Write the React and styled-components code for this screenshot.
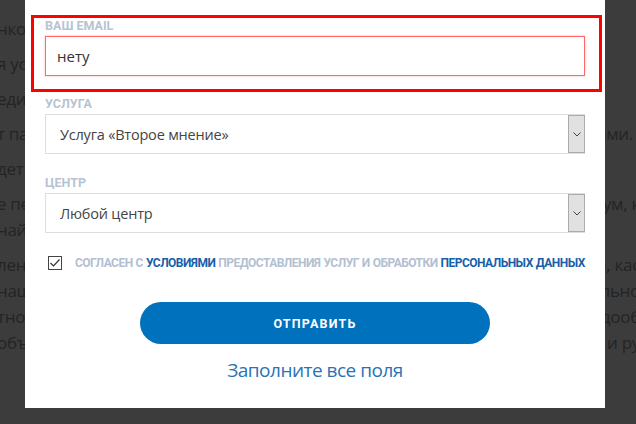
import React from 'react';
import styled, { createGlobalStyle } from 'styled-components';

const GlobalStyle = createGlobalStyle`
  html, body {
    margin: 0;
    padding: 0;
    overflow: hidden;
  }
  body {
    background: #3c3c3c;
    font-family: "Open Sans", "Noto Sans", sans-serif;
  }
`;

const Page = styled.div`
  position: relative;
  width: 636px;
  height: 424px;
  overflow: hidden;
  background: #3c3c3c;
`;

// the page behind the dimmed overlay
const Article = styled.div`
  margin: -19px 0 0 -3px;
  width: 643px;
  color: #242424;
  font-size: 17px;
  letter-spacing: -0.3px;
`;

const Para = styled.div`
  margin-bottom: 9px;
`;

const Line = styled.div`
  display: flex;
  justify-content: space-between;
  height: 26px;
  line-height: 26px;
  white-space: nowrap;
  padding-right: ${props => props.tail || 0}px;
`;

const Modal = styled.div`
  position: absolute;
  left: 25px;
  top: -20px;
  width: 580px;
  box-sizing: border-box;
  padding: 35px 20px 26px;
  background: #fff;
`;

const Highlight = styled.div`
  margin: 0 -17px 0 -14px;
  padding: 0 14px 13px 11px;
  border: 3px solid #ff0000;
`;

const Group = styled.div`
  margin-top: ${props => props.gap || 21}px;
`;

const Label = styled.div`
  font-family: "Roboto", "Open Sans", sans-serif;
  font-weight: 700;
  font-size: 12.5px;
  line-height: 15px;
  color: #b7c3d3;
  text-transform: uppercase;
  margin-bottom: 3px;
`;

const Input = styled.div`
  box-sizing: border-box;
  height: 40px;
  display: flex;
  align-items: center;
  padding: 0 11px;
  border: 1px solid #ff6b6b;
  box-shadow: 0 0 2px rgba(255, 80, 80, 0.45);
  font-size: 15px;
  color: #333;
`;

const Select = styled.div`
  box-sizing: border-box;
  height: 40px;
  display: flex;
  border: 1px solid #dedede;
  font-size: 14.5px;
  letter-spacing: -0.2px;
  color: #444;
`;

const SelectValue = styled.div`
  flex: 1;
  display: flex;
  align-items: center;
  padding-left: 14px;
`;

const Arrow = styled.div`
  width: 15px;
  margin-right: -1px;
  display: flex;
  align-items: center;
  justify-content: center;
  background: #e1e1e1;
  border: 1px solid #ababab;
`;

const Agree = styled.div`
  margin-top: 22px;
  display: flex;
  align-items: center;
  gap: 13px;
  padding-left: 3px;
  line-height: 16px;

  svg {
    flex-shrink: 0;
  }
`;

const AgreeText = styled.div`
  font-family: "Roboto", "Open Sans", sans-serif;
  font-weight: 700;
  font-size: 12px;
  letter-spacing: -0.52px;
  word-spacing: 0.5px;
  text-transform: uppercase;
  color: #b3c0d1;
  white-space: nowrap;
`;

const Link = styled.span`
  color: #185fa8;
`;

const SubmitButton = styled.div`
  margin: 31px auto 0;
  width: 350px;
  height: 42px;
  border-radius: 21px;
  background: #0071bc;
  color: #fff;
  display: flex;
  align-items: center;
  justify-content: center;
  font-family: "Roboto", "Open Sans", sans-serif;
  font-weight: 700;
  font-size: 12.5px;
  letter-spacing: 1.2px;
`;

const Message = styled.div`
  margin-top: 14px;
  text-align: center;
  font-size: 19px;
  letter-spacing: -0.5px;
  line-height: 24px;
  color: #2a72b6;
`;

const backLines = [
  [['', '']],
  [['нколь', '']],
  [['я усл', '']],
  [['еди', '']],
  [['т па', 'ями.', 7]],
  [['дет', '']],
  [['е пе', 'ум, к'], ['най', '']],
  [['лен', 'и, кас'], ['наш', 'льно'], ['тно', 'дооб'], ['объ', 'и ру']],
];

function Chevron() {
  return (
    <svg width="8" height="5" viewBox="0 0 8 5">
      <polyline points="0.5,0.5 4,4 7.5,0.5" fill="none" stroke="#444" strokeWidth="1" />
    </svg>
  );
}

function CheckBox() {
  return (
    <svg width="14" height="14" viewBox="0 0 14 14">
      <rect x="0.5" y="0.5" width="13" height="13" fill="#fff" stroke="#444" />
      <polyline points="2.5,7 5.5,10 11.5,3.5" fill="none" stroke="#333" strokeWidth="1.2" />
    </svg>
  );
}

export default function App() {
  return (
    <Page>
      <GlobalStyle />
      <Article>
        {backLines.map((para, i) => (
          <Para key={i}>
            {para.map(([left, right, tail], j) => (
              <Line key={j} tail={tail}>
                <span>{left}</span>
                <span>{right}</span>
              </Line>
            ))}
          </Para>
        ))}
      </Article>

      <Modal>
        <Highlight>
          <Label>Ваш email</Label>
          <Input>нету</Input>
        </Highlight>

        <Group gap={4}>
          <Label>Услуга</Label>
          <Select>
            <SelectValue>Услуга «Второе мнение»</SelectValue>
            <Arrow><Chevron /></Arrow>
          </Select>
        </Group>

        <Group>
          <Label>Центр</Label>
          <Select>
            <SelectValue>Любой центр</SelectValue>
            <Arrow><Chevron /></Arrow>
          </Select>
        </Group>

        <Agree>
          <CheckBox />
          <AgreeText>
            Согласен с <Link>условиями</Link> предоставления услуг и обработки <Link>персональных данных</Link>
          </AgreeText>
        </Agree>

        <SubmitButton>ОТПРАВИТЬ</SubmitButton>
        <Message>Заполните все поля</Message>
      </Modal>
    </Page>
  );
}
